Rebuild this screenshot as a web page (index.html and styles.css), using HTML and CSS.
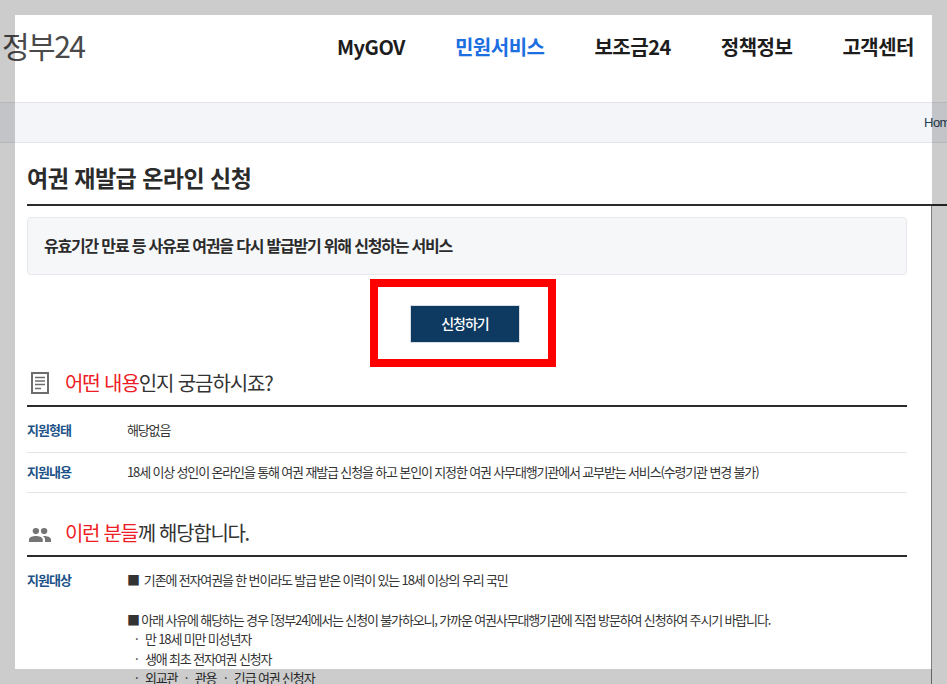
FILE: index.html
```html
<!DOCTYPE html>
<html lang="ko">
<head>
<meta charset="utf-8">
<title>여권 재발급 온라인 신청</title>
<link rel="stylesheet" href="styles.css">
</head>
<body>
<div class="page">
  <header class="header">
    <div class="logo">정부24</div>
    <nav class="nav">
      <a>MyGOV</a>
      <a class="active">민원서비스</a>
      <a>보조금24</a>
      <a>정책정보</a>
      <a>고객센터</a>
    </nav>
  </header>
  <div class="crumbs"><span>Home</span></div>
  <main class="main">
    <h1 class="title">여권 재발급 온라인 신청</h1>
    <div class="summary">유효기간 만료 등 사유로 여권을 다시 발급받기 위해 신청하는 서비스</div>
    <div class="action">
      <div class="highlight"><a class="apply">신청하기</a></div>
    </div>
    <h2 class="section first">
      <svg class="icon" width="18" height="22" viewBox="0 0 18 22"><path fill="none" stroke="#6c6c6c" stroke-width="2" d="M1 1h16v20H1z"/><path stroke="#6c6c6c" stroke-width="1.500" d="M4 5.500h10M4 9h10M4 12.500h10M4 16.500h6"/></svg>
      <span><em>어떤 내용</em>인지 궁금하시죠?</span>
    </h2>
    <div class="row"><div class="label">지원형태</div><div class="value">해당없음</div></div>
    <div class="row"><div class="label">지원내용</div><div class="value">18세 이상 성인이 온라인을 통해 여권 재발급 신청을 하고 본인이 지정한 여권 사무대행기관에서 교부받는 서비스(수령기관 변경 불가)</div></div>
    <h2 class="section second">
      <svg class="icon" width="22" height="14" viewBox="0 0 24 16" preserveAspectRatio="none"><path fill="#757575" d="M7.500 7a3.300 3.300 0 1 0 0-7 3.300 3.300 0 0 0 0 7zM16.500 7a3.300 3.300 0 1 0 0-7 3.300 3.300 0 0 0 0 7zM7.500 9C4.500 9 0 10.300 0 13v3h15v-3c0-2.700-4.500-4-7.500-4zM16.500 9c-.5 0-1 0-1.500.1 1.500 1 2.500 2.300 2.500 3.900v3H24v-3c0-2.700-4.500-4-7.500-4z"/></svg>
      <span><em>이런 분들</em>께 해당합니다.</span>
    </h2>
    <div class="target">
      <div class="label">지원대상</div>
      <div class="target-text">
        <p class="gap">■  기존에 전자여권을 한 번이라도 발급 받은 이력이 있는 18세 이상의 우리 국민</p>
        <p>■ 아래 사유에 해당하는 경우 [정부24]에서는 신청이 불가하오니, 가까운 여권사무대행기관에 직접 방문하여 신청하여 주시기 바랍니다.</p>
        <p class="sub">·   만 18세 미만 미성년자</p>
        <p class="sub">·   생애 최초 전자여권 신청자</p>
        <p class="sub">·   외교관   ·   관용   ·   긴급 여권 신청자</p>
      </div>
    </div>
  </main>
</div>
<div class="edge" aria-hidden="true"></div>
<div class="frame" aria-hidden="true"></div>
</body>
</html>
```
FILE: styles.css
```css
* { box-sizing: border-box; }
html, body { margin: 0; height: 684px; overflow: hidden; background: #fff; }
body { font-family: "Noto Sans CJK KR", "Noto Sans", sans-serif; color: #222; }
.page { width: 947px; height: 684px; overflow: hidden; }
.header { height: 102px; display: flex; align-items: flex-start; justify-content: space-between; padding: 0 33px 0 2px; }
.logo { margin-top: 25px; font-size: 30px; line-height: 40px; letter-spacing: -1.5px; color: #4a4a4a; }
.nav { display: flex; gap: 50px; margin-top: 32px; }
.nav a { font-size: 20px; line-height: 30px; font-weight: 700; letter-spacing: -0.5px; color: #1d1d1d; }
.nav a.active { color: #1c6fe0; }
.crumbs { height: 41px; background: #f4f5f9; border-top: 1px solid #e4e4e8; border-bottom: 1px solid #e4e4e8; display: flex; justify-content: flex-end; align-items: center; overflow: hidden; }
.crumbs span { flex: none; width: 23px; overflow: hidden; font-family: "Liberation Sans", sans-serif; font-size: 13px; letter-spacing: -0.5px; color: #1f3f55; white-space: nowrap; }
.main { padding: 15px 40px 0 27px; }
.title { margin: 0 -40px 0 0; height: 48px; border-bottom: 2px solid #2b2b2b; font-size: 23px; line-height: 39px; font-weight: 700; letter-spacing: -0.5px; color: #2b2b2b; }
.summary { margin-top: 11px; height: 58px; padding: 0 16px; background: #f6f7f9; border: 1px solid #e6e8ec; border-radius: 4px; font-size: 16px; line-height: 54px; font-weight: 700; letter-spacing: -1.2px; color: #2b2b2b; }
.action { display: flex; justify-content: center; margin-top: 4px; padding-right: 8px; }
.highlight { width: 186px; height: 88px; border: 8px solid #fe0000; display: flex; align-items: center; justify-content: center; }
.apply { width: 110px; height: 38px; margin: 2px 0 0 4px; background: #0e3a62; border: 1px solid #d8dde2; color: #fff; font-size: 14px; line-height: 35px; text-align: center; font-weight: 500; letter-spacing: -1px; }
.section { display: flex; align-items: center; margin: 0; border-bottom: 2px solid #2b2b2b; font-size: 20px; font-weight: 400; letter-spacing: -1.1px; color: #333; }
.section.first { height: 40px; padding: 0 0 7px 4px; gap: 16px; }
.section.second { height: 47px; margin-top: 17px; gap: 14px; padding-left: 2px; letter-spacing: -1.3px; }
.section.second .icon { margin-top: 4px; }
.section em { font-style: normal; color: #ee1c25; }
.icon { flex: none; }
.row { display: flex; height: 46px; align-items: center; border-bottom: 1px solid #e4e4e4; }
.row + .row { height: 40px; padding-bottom: 2px; }
.label { width: 100px; flex: none; font-size: 13px; font-weight: 700; letter-spacing: -1px; color: #1d5288; }
.value { font-size: 13px; letter-spacing: -1.15px; color: #333; white-space: nowrap; }
.target { display: flex; padding-top: 13px; }
.target .label { line-height: 20px; }
.target-text { font-size: 13px; letter-spacing: -1.15px; color: #333; line-height: 19.500px; }
.target-text p { margin: 0; white-space: pre; }
.target-text .gap { margin-bottom: 20px; }
.target-text .sub { padding-left: 8px; }
.edge { position: fixed; left: 931px; top: 206px; bottom: 0; width: 1px; background: #7d7d7d; }
.frame { position: fixed; inset: 0; border: 15px solid rgba(0, 0, 0, .2); pointer-events: none; }
```
